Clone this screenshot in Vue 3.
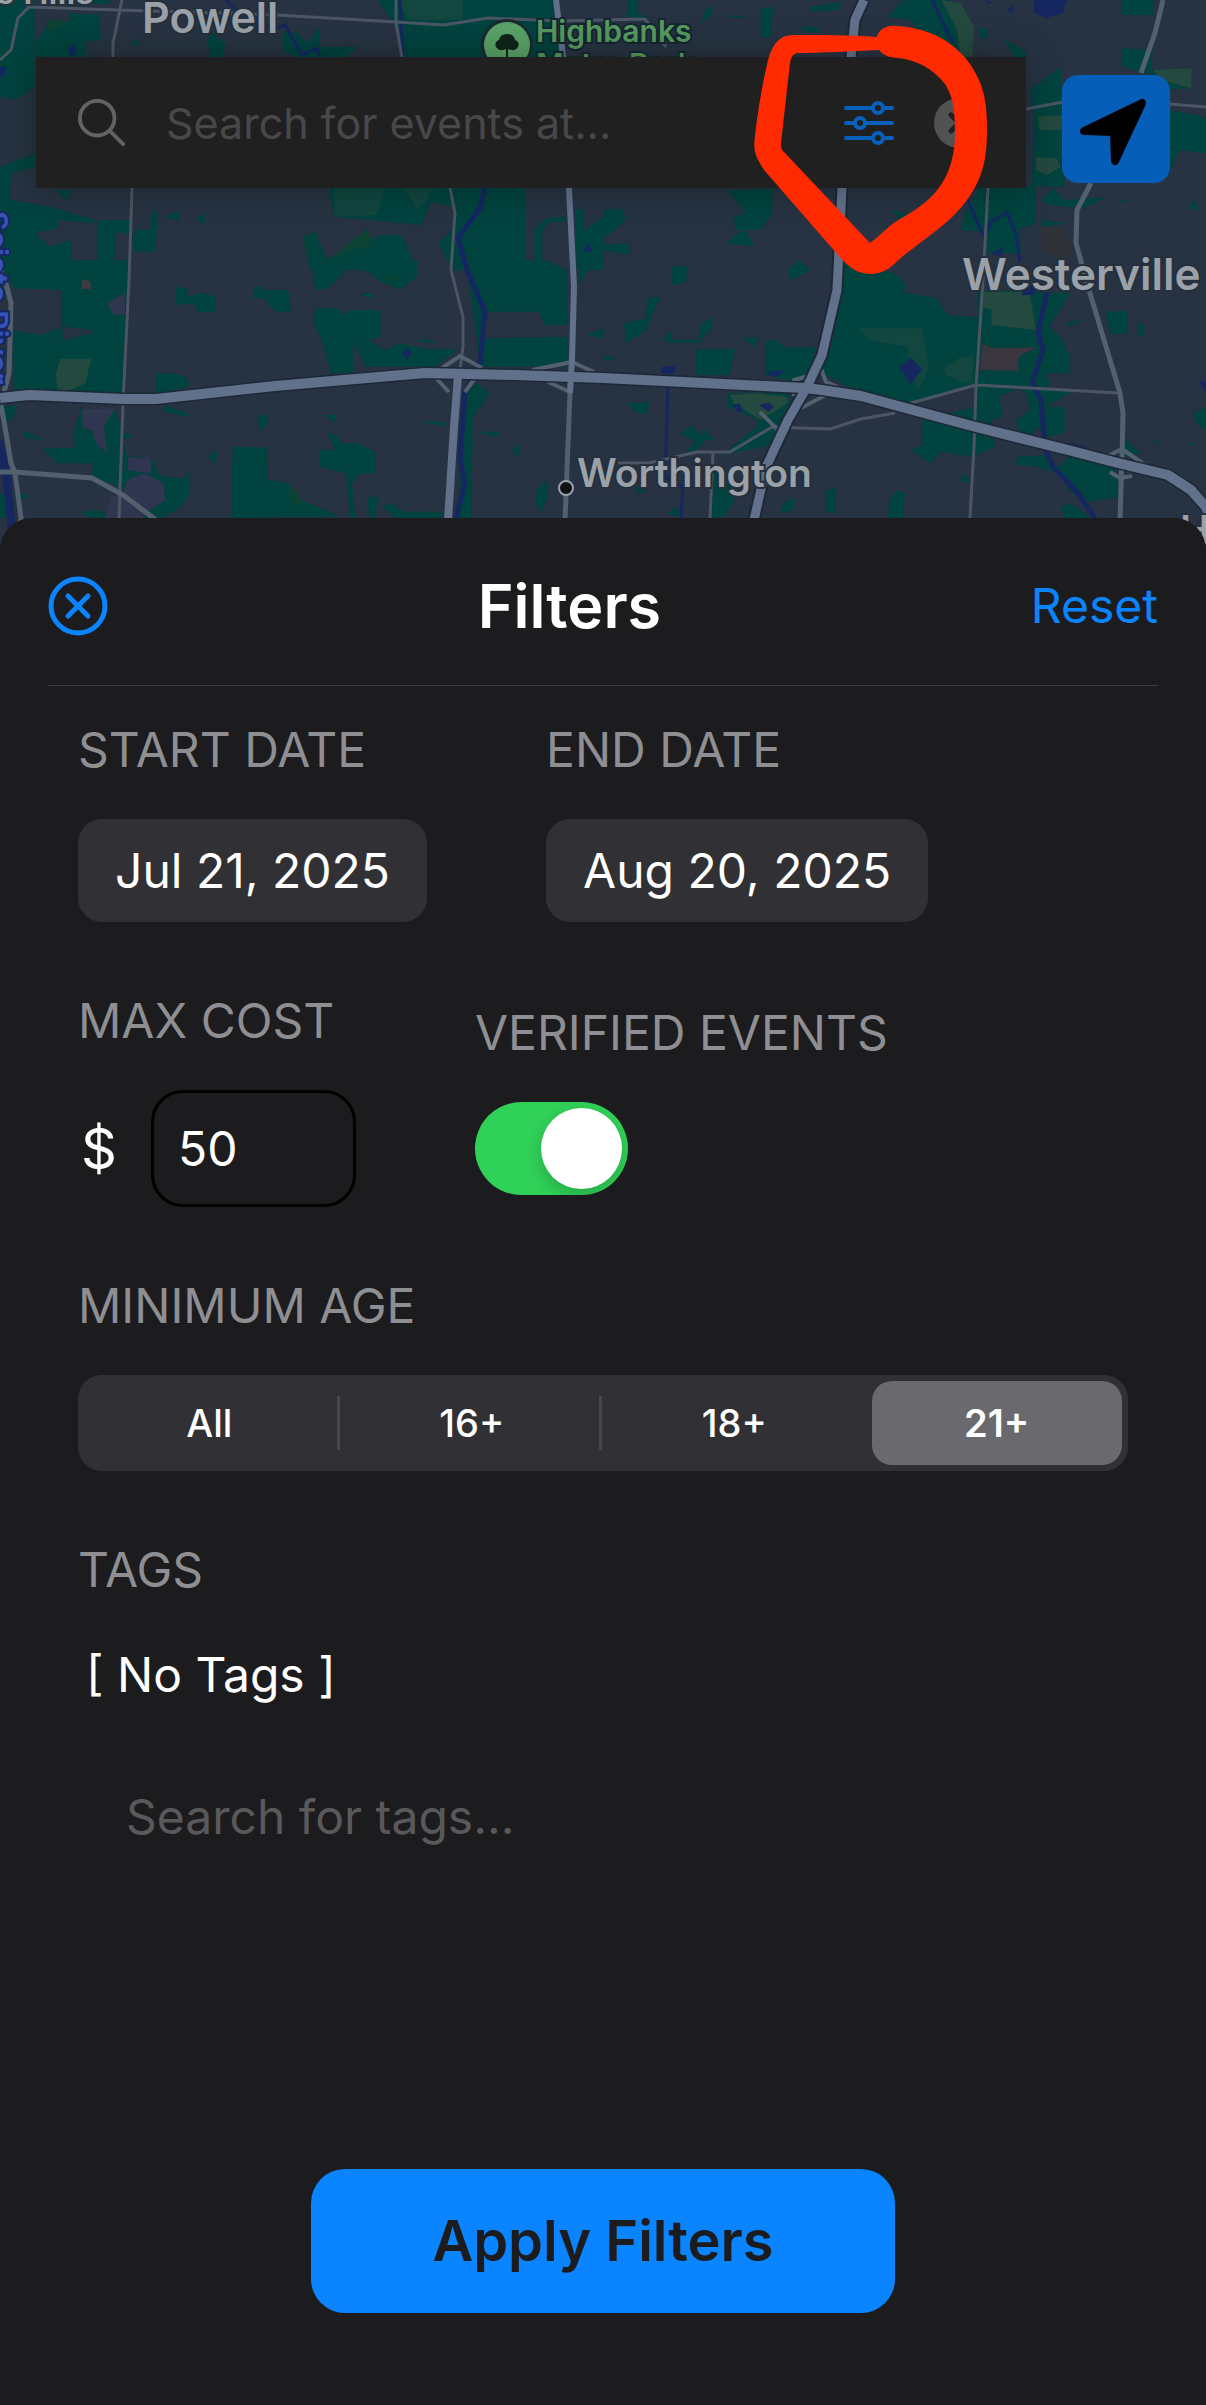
<script setup>
import { ref } from 'vue'

const ages = ['All', '16+', '18+', '21+']
const age = ref('21+')
const cost = ref('50')
const verified = ref(true)
const query = ref('')
const tagQuery = ref('')
</script>

<template>
  <main class="screen">
    <section class="hero">
      <svg class="map" viewBox="0 0 1206 570" preserveAspectRatio="xMidYMin slice" aria-hidden="true">
        <rect width="1206" height="570" fill="#273342" />
        <!-- parks, north-west -->
        <g transform="scale(.3846 .3333)" fill="#00433f">
          <path d="M0 0H90V260L40 300 0 290ZM92 130 130 60 180 65 180 40 260 45 262 120 222 125 222 170H92ZM150 0H290L280 12H170ZM345 125 362 115 358 135 345 138ZM550 95 585 130 580 171H545L540 120ZM735 100 770 95 800 130 830 80 830 140 930 142 900 171H770L735 150ZM980 0H1440V50L1460 171H1045L1030 80 1000 30Z" />
          <path d="M0 500 90 460 95 500 30 520 25 600 130 620 250 660 240 670 150 660 150 685 90 700 130 740 185 720 190 810H0ZM145 570H185L175 605ZM252 660H335V690L405 750H345V700H300V770L270 810H252ZM395 630 410 640 405 755H350V690H390ZM430 650 465 630V665ZM510 655 535 640 530 675Z" />
          <path d="M855 564H1365V810H1175L1140 730 1180 680 1180 620 1120 605 1095 675 870 650ZM790 710 820 695 850 775 900 760 990 705H1045L1085 810H805ZM1390 690 1420 655 1470 650V665L1430 665 1410 690 1410 810H1390ZM1495 625 1515 630 1520 690 1568 650V810H1500Z" />
          <path fill="#12463f" d="M870 564H1000L980 645 870 650ZM1050 564H1130L1110 600 1085 630ZM1040 0H1203V60H1060Z" />
          <path fill="#0c4332" d="M120 60 180 65 130 100ZM955 685 970 730 860 775ZM795 700 805 765 790 740Z" />
          <path fill="#152660" d="M178 145 197 130V165H180ZM0 200 15 200V220L0 235ZM1515 755 1530 725 1540 755ZM0 705 8 720 0 735Z" />
        </g>
        <!-- parks, north-east -->
        <g transform="translate(603) scale(.3846 .3333)" fill="#00433f">
          <path d="M65 0H90V40L120 55 60 50ZM265 30 285 15 280 45 255 75ZM320 45 380 50 345 55ZM410 25 445 20 435 110 410 115ZM540 20 620 5 610 30 540 35ZM515 80H560V100L515 90ZM780 0H900L960 171H880L800 60 740 50ZM975 85H1000V110L980 115ZM1040 115 1100 155 1100 171H1070ZM1350 0H1430V45L1350 45ZM1350 145 1430 150 1425 210 1530 205 1530 265 1470 270 1430 225 1350 200Z" />
          <path d="M1110 270 1190 200 1195 400 1130 430ZM1120 340H1200V560H1115ZM1473 330 1568 350V460L1500 450 1473 515ZM325 570 440 566V640L410 690 345 690 340 650 370 640ZM350 700 370 690 395 740 320 730ZM180 800 215 797 215 835 180 850ZM480 810 530 800 500 835ZM0 630 50 625 60 660 20 700 0 715ZM0 735 65 730 70 765 0 750ZM940 640 980 560H1125V670L1080 690 1090 760 1000 760 990 695 930 690ZM1140 600 1170 565 1200 600 1310 590 1250 625 1160 615ZM1520 620 1540 600 1550 635ZM1345 600 1370 600 1350 610ZM750 630 790 640 770 660ZM620 820 700 825 790 860 780 870H620ZM1140 660 1210 670 1140 680Z" />
          <path fill="#24493f" d="M880 0 930 10 965 80 960 171H930L920 90ZM1130 350 1195 345V390H1135ZM1125 470 1180 475 1190 500 1155 525 1125 510ZM1430 210 1530 205V265L1450 240Z" />
          <path fill="#2f3236" d="M1140 685H1195L1225 760 1200 780 1140 750Z" />
          <path fill="#152660" d="M1120 0 1208 0 1195 40 1150 55 1120 35ZM990 0 1012 5 1005 12ZM1050 30 1065 15V40ZM1010 760 1040 740 1035 770Z" />
        </g>
        <!-- parks, south-west -->
        <g transform="translate(0 260) scale(.3846 .3333)" fill="#00433f">
          <path d="M0 0H335L325 400H140L35 395V210L110 225 160 200 165 240 200 230 240 220 240 300 130 320 130 365 100 350 95 265 150 260 145 295H240V210L160 200V90L35 85ZM455 80 485 85 490 110 525 98 560 110V155H515L500 130 455 135ZM660 85 678 75 680 90H750L757 155 715 155 685 115 660 115ZM808 0H1085V50L1040 90 990 65 940 25 900 30 855 85 820 90ZM820 145 880 145 895 165 910 150H990V230L960 240 1000 270 1040 250 1100 265 1190 270 1130 320 950 320 920 250 920 340H860L835 235 815 190ZM935 105 960 97 985 115ZM1085 238 1130 240 1130 248 1090 245Z" />
          <path d="M1210 0H1420L1475 30V195H1415L1400 155 1270 155 1255 235 1475 230V320H1250ZM1505 0H1550L1505 75ZM1525 225 1568 205V235ZM405 340H455L490 355V380L405 400ZM670 465H697V495L675 515ZM840 465H873V490ZM1090 485H1160V500ZM850 515 885 535 885 550 930 548 975 575V640L940 640 915 670 925 774H910L900 640 830 620 830 570 870 570ZM1235 515H1300L1290 530ZM605 560 695 563 697 660 755 670 765 710 885 770 600 774ZM540 590 563 570 563 612ZM955 710H985L975 774H960ZM995 740 1015 730 1050 755H1150V774H1030ZM1395 690 1420 660 1425 705 1410 755 1392 735ZM1330 570 1350 550 1350 590ZM1240 370 1275 400 1230 470 1225 774H1190L1205 400Z" />
          <path d="M60 510 115 540 65 535ZM110 565 195 563 190 520 210 445 300 450 320 520 350 525 320 540 330 585 400 600 410 640 430 650 475 655 495 635 490 710 460 750 420 774H300L310 680 240 650 240 610 150 610ZM210 755 260 750 290 774H230ZM50 700 80 708 55 720ZM0 440 45 435 30 480 5 490ZM425 435 490 460 490 470 425 455ZM0 700H15V774H0Z" />
          <path fill="#313650" d="M280 130 325 100V165H295ZM213 447H298L270 500 278 580 250 550 240 510 215 505ZM333 590 393 598V640L333 630ZM330 660 375 640 425 670 430 720 390 750 370 774H270L290 710 320 700Z" />
          <path fill="#24493f" d="M157 297H237L222 370 185 390H150L145 345Z" />
          <path fill="#0c4332" d="M1000 45 1028 48 1010 70ZM695 563 697 620 692 600ZM755 670 800 750 750 720Z" />
          <path fill="#3e3a40" d="M213 57 235 65 237 87H213Z" />
          <path fill="#152660" d="M1045 280 1060 262 1070 280 1058 297Z" />
        </g>
        <!-- parks, south-east -->
        <g transform="translate(603 260) scale(.3846 .3333)" fill="#00433f">
          <path d="M625 0 760 40 790 75 780 95 870 115 895 165 975 172 975 375 800 430 670 400 570 340 590 230ZM180 20 220 17 215 70 180 75ZM480 30 510 0 540 30 490 60ZM115 115 150 110 125 170 115 210 60 250 55 190 110 175ZM155 235 180 210 175 240 250 240 250 200 280 170 285 200 260 230 255 248 170 248ZM365 230 405 235 390 260ZM243 267H343L330 345 240 345 240 320ZM423 240 445 240 475 262H553L530 375 423 345ZM0 283 35 297 0 303Z" />
          <path d="M325 400 480 398 490 430 470 520 420 560 310 585 400 500 400 480 325 440ZM200 520 230 495 255 530 260 505 290 540 265 540 245 570 215 575 240 545ZM60 430 120 425 115 460 90 460ZM975 60 990 90 1215 100 1160 200 1190 230 1215 290 1213 340H1150L1165 370 1145 390 1220 395 1150 440 1200 440 1200 520 1150 530 1130 500 1090 560 1075 480 1110 450 1100 400 1080 385 1030 410 1040 470 1010 480 1020 560 960 590 880 575 850 610 800 570 830 555 830 480 970 440ZM1210 185 1245 180 1210 203ZM1305 155 1365 153V220L1320 223ZM1390 185 1405 195 1405 235 1388 220Z" />
          <path d="M1075 590 1150 585 1185 620 1235 560 1330 590 1340 710 1270 725 1220 700 1180 640 1130 620 1075 615ZM1535 460 1568 440V510L1540 490ZM1430 545 1450 542 1440 555ZM1520 548 1545 548 1530 560ZM930 650 950 645 950 668 930 665ZM745 720 765 690 785 700 780 774H740ZM580 690 605 683 605 760 580 755ZM465 740 480 720 500 715 495 750 465 760ZM290 630 345 690 340 730 310 774H280ZM165 760 190 740 210 774ZM1190 740 1215 730 1270 774H1200ZM85 680H105V698H85ZM1350 530 1400 580 1350 590Z" />
          <path fill="#12463f" d="M665 205H830L840 280 848 320 820 395 805 340 790 260 690 240ZM885 325 930 290 965 290 960 370 930 365 890 345Z" />
          <path fill="#24493f" d="M990 95H1110L1125 210 1010 195 1010 150 988 140ZM330 405 400 400 480 410 480 430 410 480 340 430Z" />
          <path fill="#3b353f" d="M985 250 1010 265 1128 262 1080 290 1080 333 980 330Z" />
          <path fill="#152660" d="M768 325 800 293 830 330 798 372 785 345ZM152 320 187 318V342L150 340ZM430 335 475 330 450 350 430 345ZM335 435 355 430 365 455 350 455ZM405 435 430 428 445 440 430 455ZM1548 360 1568 365V400ZM1090 65 1130 80 1120 105 1090 105ZM1210 548 1265 560 1215 562Z" />
        </g>
        <g class="water">
          <path d="M225 0 246 18 277 28 285 25 302 55 317 48 320 57M400 0 403 57M932 0 953 43" />
          <path stroke-width="5" d="M485 188 480 208 458 238 467 270 485 312 480 363 465 393 460 460 465 483 456 518" />
          <path d="M966 197 984 237 991 222 1007 213 1016 233 1020 262M668 387 665 477 683 487 681 518" />
          <path stroke-width="5" d="M1047 292 1038 332 1043 350 1032 383 1041 400 1045 447 1053 467 1078 493 1096 520" />
          <path stroke-width="8" d="M-2 440 6 473 12 530" />
        </g>
        <g class="minor">
          <path d="M0 60 11 50 18 18 29 7 119 10 277 15 396 22 444 25 488 18 558 21 645 19 666 47M122 0 113 43 113 57M132 188 129 280 123 403 119 518M396 0 396 23 402 57M450 188 455 213 451 270 463 317 463 347 460 370" />
          <path d="M988 188 983 280 976 387 974 447 970 518M1026 109 1063 102M1170 104 1206 107M911 403 976 385 1118 393M618 463 649 463 697 452 730 452 772 427 830 429 861 419 895 413M713 453 710 518" />
        </g>
        <g class="road">
          <path d="M0 268 5 280 11 303 9 373 4 392M1 405 6 433 11 463 15 473 21 518 20 530M0 472 15 472 92 478 123 495 156 520" />
          <path d="M1163 0 1155 33 1141 73M1091 183 1077 210 1076 243 1089 290 1120 393 1123 413 1122 457 1120 520M570 393 565 520" />
          <path class="ramp" d="M442 368 460 356 482 368M436 378 449 392M475 378 465 392M532 370 572 362 594 372M548 382 570 392M760 412 784 436 784 440M794 396 794 380 808 376M820 366 826 382 838 387M801 408 824 396M1108 456 1122 449 1145 465M1110 472 1120 478 1132 476" />
        </g>
        <g class="casing">
          <path d="M0 398 29 395 124 399 156 399 275 386 425 373 515 375 603 378 805 388 822 390 861 396 972 426 1068 450 1118 463 1168 475 1191 490 1206 507 1216 530" />
          <path d="M864 0 855 20 851 57 842 188 837 290 822 355 807 387 788 420 766 467 754 520" />
        </g>
        <g class="highway">
          <path stroke-width="10" d="M0 398 29 395 124 399 156 399 275 386 425 373 515 375 603 378 805 388 822 390 861 396 972 426 1068 450 1118 463 1168 475 1191 490 1206 507 1216 530" />
          <path stroke-width="9" d="M864 0 855 20 851 57 842 188 837 290 822 355 807 387 788 420 766 467 754 520" />
          <path stroke-width="8" d="M458 376 454 427 448 520" />
          <path stroke-width="6" d="M556 0 563 57 569 188 574 287 572 360 570 393" />
        </g>
        <circle cx="566" cy="488" r="7" fill="#101216" stroke="#9ba1a9" stroke-width="2" />
        <g class="poi">
          <circle cx="507" cy="45" r="26" fill="#1c2a30" />
          <circle cx="507" cy="45" r="23" fill="#5aa268" />
          <path d="M506 57V49Q499 52 496 47 494 42 499 40 500 34 507 34 514 34 515 40 520 42 518 47 515 52 508 49V57Z" fill="#10251a" />
        </g>
        <g class="places">
          <text x="142" y="33" font-size="43">Powell</text>
          <text x="577" y="487" font-size="39">Worthington</text>
          <text x="962" y="290" font-size="44">Westerville</text>
          <text x="1180" y="544" font-size="40">H</text>
          <text x="94" y="4" font-size="34" text-anchor="end">Shawnee Hills</text>
          <text class="park" x="536" y="42" font-size="30">Highbanks</text>
          <text class="park" x="536" y="75" font-size="30">Metro Park</text>
          <text class="river" transform="translate(-14 211) rotate(90)" font-size="30">Scioto River</text>
        </g>
      </svg>

      <div class="topbar">
        <div class="search">
          <svg class="lens" width="48" height="50" viewBox="0 0 50 50" aria-hidden="true">
            <circle cx="20" cy="20" r="18" />
            <path d="M33 33 47 47" />
          </svg>
          <input v-model="query" type="text" aria-label="Search for events" placeholder="Search for events at..." />
          <button class="plain" type="button" aria-label="Filters">
            <svg class="sliders" width="50" height="44" viewBox="0 0 50 44" aria-hidden="true">
              <path d="M2 7H29M39 7H48M2 22H11M21 22H48M2 37H29M39 37H48" />
              <circle cx="34" cy="7" r="5" />
              <circle cx="16" cy="22" r="5" />
              <circle cx="34" cy="37" r="5" />
            </svg>
          </button>
          <button class="plain" type="button" aria-label="Clear">
            <svg width="50" height="50" viewBox="0 0 50 50" aria-hidden="true">
              <circle cx="25" cy="25" r="25" fill="#525253" />
              <path d="M17 17 33 33M33 17 17 33" stroke="#202021" stroke-width="5" stroke-linecap="round" />
            </svg>
          </button>
        </div>
        <button class="locate" type="button" aria-label="My location">
          <svg width="108" height="108" viewBox="0 0 108 108" aria-hidden="true">
            <path d="M80 28 53 86 52 57 22 56Z" fill="#000" stroke="#000" stroke-width="8" stroke-linejoin="round" />
          </svg>
        </button>
        <svg class="scribble" width="240" height="256" viewBox="750 22 240 256" aria-hidden="true">
          <path fill="#ff2a00" fill-rule="evenodd" d="M877 37C879 29 887 25 896 26C936 28 965 48 979 80C986 96 987 112 987 130C987 158 983 178 967 200C952 221 930 235 903 256C893 265 885 274 871 274C858 274 849 268 838 255L764 170C755 156 753 150 755 136C758 108 763 82 768 60C773 43 780 35 793 35C820 35 850 35 877 37ZM797 53C820 53 850 51 879 50C885 57 890 57 898 58C917 60 932 68 945 84C953 97 955 108 955 133C955 160 947 182 930 198C916 211 904 216 891 225C883 232 877 238 870 243L784 152C781 149 781 147 781 143L790 63C791 57 793 54 797 53Z" />
        </svg>
      </div>
    </section>

    <section class="sheet">
      <header class="head">
        <button class="plain" type="button" aria-label="Close">
          <svg class="close" width="60" height="60" viewBox="0 0 60 60" aria-hidden="true">
            <circle cx="30" cy="30" r="27" />
            <path d="M20 20 40 40M40 20 20 40" />
          </svg>
        </button>
        <h1>Filters</h1>
        <button class="plain reset" type="button">Reset</button>
      </header>

      <form class="body" @submit.prevent>
        <div class="row">
          <div class="field">
            <span id="start" class="label">START DATE</span>
            <button class="chip" type="button" aria-describedby="start">Jul 21, 2025</button>
          </div>
          <div class="field">
            <span id="end" class="label">END DATE</span>
            <button class="chip" type="button" aria-describedby="end">Aug 20, 2025</button>
          </div>
        </div>

        <div class="row">
          <div class="field">
            <label class="label" for="cost">MAX COST</label>
            <div class="money">
              <span class="dollar">$</span>
              <input id="cost" v-model="cost" type="text" inputmode="numeric" />
            </div>
          </div>
          <div class="field">
            <label class="label" for="verified">VERIFIED EVENTS</label>
            <input id="verified" v-model="verified" class="switch" type="checkbox" role="switch" />
          </div>
        </div>

        <fieldset class="field">
          <legend class="label">MINIMUM AGE</legend>
          <div class="segments">
            <label v-for="option in ages" :key="option" class="segment">
              <input v-model="age" type="radio" name="age" :value="option" />
              <span>{{ option }}</span>
            </label>
          </div>
        </fieldset>

        <div class="tags">
          <label class="label" for="tags">TAGS</label>
          <p>[ No Tags ]</p>
          <input id="tags" v-model="tagQuery" type="text" placeholder="Search for tags..." />
        </div>

        <button class="apply" type="submit">Apply Filters</button>
      </form>
    </section>
  </main>
</template>

<style>
body {
  margin: 0;
  background: #1c1c1e;
}
</style>

<style scoped>
* {
  box-sizing: border-box;
}
.screen {
  display: flex;
  flex-direction: column;
  min-height: 100vh;
  font-family: Inter, "Liberation Sans", sans-serif;
  font-size: 48px;
  line-height: 58px;
  color: #fff;
  overflow: hidden;
}
button,
input {
  font: inherit;
  color: inherit;
}
.plain {
  display: flex;
  padding: 0;
  border: 0;
  background: none;
}
.hero {
  position: relative;
  height: 570px;
  overflow: hidden;
}
.map {
  position: absolute;
  inset: 0;
  width: 100%;
  height: 100%;
}
.map path {
  stroke-linejoin: round;
}
.water {
  fill: none;
  stroke: #152660;
  stroke-width: 3px;
}
.minor {
  fill: none;
  stroke: #4b5563;
  stroke-width: 3px;
}
.road {
  fill: none;
  stroke: #526070;
  stroke-width: 5px;
}
.ramp {
  stroke-width: 4px;
}
.casing {
  fill: none;
  stroke: #1d2837;
  stroke-width: 13px;
}
.highway {
  fill: none;
  stroke: #62718b;
}
.places {
  font-weight: 600;
  fill: #9aa1a9;
  stroke: #25303c;
  stroke-width: 4px;
  paint-order: stroke;
}
.park {
  fill: #569a5e;
  stroke: #142630;
}
.river {
  fill: #3653b8;
  stroke: #152660;
}
.topbar {
  position: relative;
  display: flex;
  align-items: center;
  gap: 36px;
  padding: 57px 36px 0;
}
.search {
  flex: 1;
  display: flex;
  align-items: center;
  min-width: 0;
  height: 131px;
  padding: 0 42px;
  gap: 40px;
  background: #202021;
  box-shadow: 0 0 36px rgba(0, 0, 0, 0.3);
}
.search input {
  flex: 1;
  min-width: 0;
  padding: 0;
  border: 0;
  background: none;
  font-size: 43px;
}
.search input::placeholder {
  color: #48484b;
  opacity: 1;
}
.lens {
  fill: none;
  stroke: #636367;
  stroke-width: 4px;
  stroke-linecap: round;
}
.sliders {
  fill: none;
  stroke: #0860bb;
  stroke-width: 4px;
  stroke-linecap: round;
}
.locate {
  width: 108px;
  height: 108px;
  margin-top: 12px;
  padding: 0;
  border: 0;
  border-radius: 16px;
  background: #065eb8;
}
.locate svg {
  display: block;
}
.scribble {
  position: absolute;
  top: 22px;
  right: 216px;
}
.sheet {
  position: relative;
  flex: 1;
  display: flex;
  flex-direction: column;
  margin-top: -52px;
  border-radius: 32px 32px 0 0;
  background: #1c1c1e;
}
.head {
  display: flex;
  align-items: center;
  justify-content: space-between;
  height: 168px;
  margin: 0 48px;
  padding-top: 8px;
  border-bottom: 1px solid #3c3c3e;
}
h1 {
  margin: 0;
  font-size: 61px;
  font-weight: 600;
  line-height: 74px;
}
.close {
  fill: none;
  stroke: #0a84ff;
  stroke-width: 5px;
  stroke-linecap: round;
}
.reset {
  color: #0a84ff;
}
.body {
  flex: 1;
  display: flex;
  flex-direction: column;
  gap: 70px;
  padding: 35px 78px 92px;
}
.row {
  display: flex;
  align-items: center;
  gap: 119px;
}
.field {
  display: flex;
  flex-direction: column;
  align-items: flex-start;
  gap: 40px;
  margin: 0;
  padding: 0;
  border: 0;
}
.label {
  padding: 0;
  color: #8e8e93;
}
.chip {
  height: 103px;
  padding: 0 37px;
  border: 0;
  border-radius: 24px;
  background: #313135;
}
.money {
  display: flex;
  align-items: center;
  justify-content: space-between;
  width: 278px;
}
.dollar {
  padding-left: 3px;
  font-size: 56px;
}
.money input {
  width: 205px;
  height: 117px;
  padding: 0 24px;
  border: 3px solid #000;
  border-radius: 32px;
  background: none;
}
.switch {
  appearance: none;
  display: flex;
  width: 153px;
  height: 93px;
  margin: 0;
  padding: 6px;
  border-radius: 47px;
  background: #39393d;
  overflow: hidden;
}
.switch::before {
  content: "";
  width: 81px;
  height: 81px;
  border-radius: 50%;
  background: #fff;
  box-shadow: 0 6px 16px rgba(0, 0, 0, 0.2);
}
.switch:checked {
  justify-content: flex-end;
  background: #30d158;
}
fieldset.field {
  display: block;
}
legend {
  display: block;
  margin-bottom: 40px;
}
.segments {
  display: grid;
  grid-template-columns: repeat(4, 1fr);
  height: 96px;
  border-radius: 24px;
  background: #313135;
}
.segment {
  position: relative;
  display: grid;
  padding: 6px;
  font-size: 38px;
  font-weight: 500;
}
.segment span {
  display: grid;
  place-items: center;
  border-radius: 20px;
}
.segment input {
  position: absolute;
  opacity: 0;
}
.segment input:checked + span {
  background: #69696e;
  font-weight: 600;
}
.segment:nth-child(-n + 2)::after {
  content: "";
  position: absolute;
  top: 21px;
  right: 1px;
  width: 3px;
  height: 54px;
  background: #48484c;
}
.tags {
  display: flex;
  flex-direction: column;
  gap: 47px;
}
.tags p {
  margin: 0;
  padding: 0 8px;
}
.tags input {
  height: 130px;
  padding: 0 48px;
  border: 0;
  background: none;
}
.tags input::placeholder {
  color: #59595c;
  opacity: 1;
}
.apply {
  align-self: center;
  width: 584px;
  height: 144px;
  margin-top: auto;
  border: 0;
  border-radius: 34px;
  background: #0a84ff;
  color: #1c1c1e;
  font-size: 56px;
  font-weight: 600;
}
</style>
